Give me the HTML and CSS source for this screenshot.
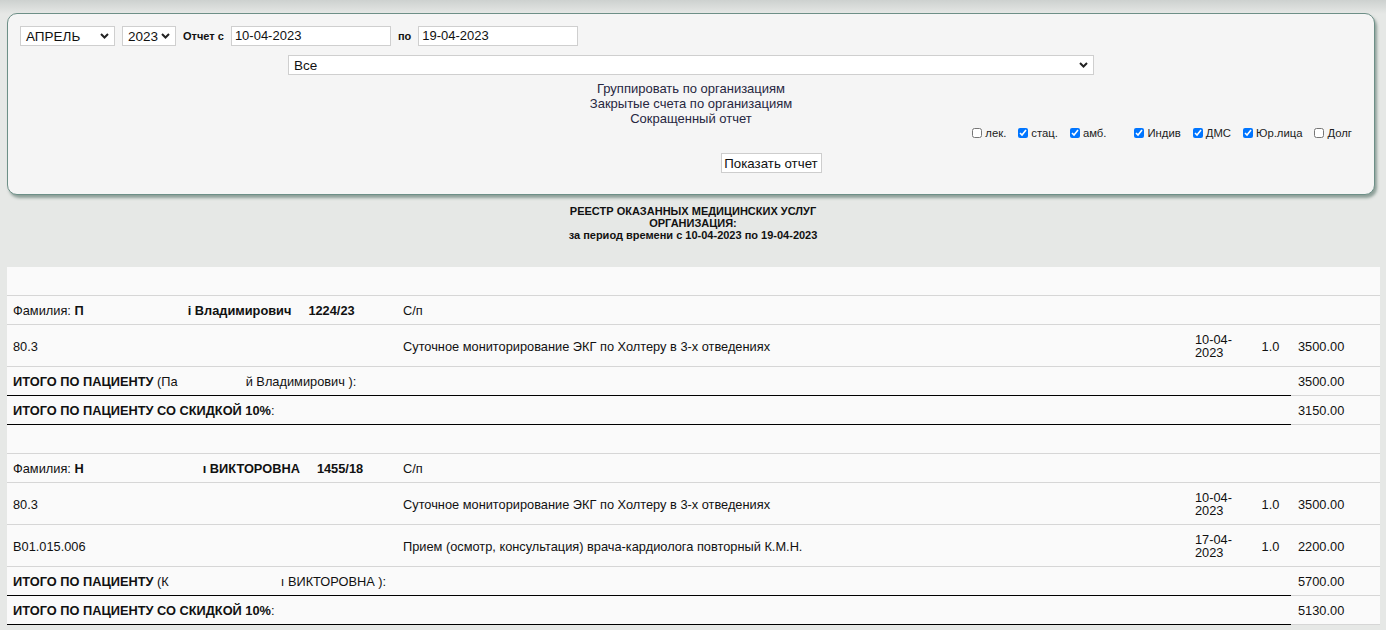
FILE: index.html
```html
<!DOCTYPE html>
<html lang="ru">
<head>
<meta charset="utf-8">
<title>Реестр оказанных медицинских услуг</title>
<link rel="stylesheet" href="styles.css">
</head>
<body>
<div class="panel">
  <div class="row1">
    <div class="fsel sel-month"><span>АПРЕЛЬ</span><svg class="chev" width="9" height="6" viewBox="0 0 9 6"><polyline points="1,1 4.5,4.5 8,1" fill="none" stroke="#222" stroke-width="2"/></svg></div>
    <div class="fsel sel-year"><span>2023</span><svg class="chev" width="9" height="6" viewBox="0 0 9 6"><polyline points="1,1 4.5,4.5 8,1" fill="none" stroke="#222" stroke-width="2"/></svg></div>
    <span class="lbl lbl-from">Отчет с</span>
    <div class="finput">10-04-2023</div>
    <span class="lbl lbl-to">по</span>
    <div class="finput">19-04-2023</div>
  </div>
  <div class="row2">
    <div class="fsel sel-org"><span>Все</span><svg class="chev" width="9" height="6" viewBox="0 0 9 6"><polyline points="1,1 4.5,4.5 8,1" fill="none" stroke="#222" stroke-width="2"/></svg></div>
  </div>
  <div class="links">
    <div>Группировать по организациям</div>
    <div>Закрытые счета по организациям</div>
    <div>Сокращенный отчет</div>
  </div>
  <div class="checks">
    <label class="chk"><input type="checkbox">лек.</label>
    <label class="chk"><input type="checkbox" checked>стац.</label>
    <label class="chk"><input type="checkbox" checked>амб.</label>
    <label class="chk grp"><input type="checkbox" checked>Индив</label>
    <label class="chk"><input type="checkbox" checked>ДМС</label>
    <label class="chk"><input type="checkbox" checked>Юр.лица</label>
    <label class="chk"><input type="checkbox">Долг</label>
  </div>
  <div class="btnrow"><button class="btn">Показать отчет</button></div>
</div>

<div class="title">
  <div>РЕЕСТР ОКАЗАННЫХ МЕДИЦИНСКИХ УСЛУГ</div>
  <div>ОРГАНИЗАЦИЯ:</div>
  <div>за период времени с 10-04-2023 по 19-04-2023</div>
</div>

<table class="report">
  <colgroup>
    <col class="c1"><col class="c2"><col class="c3"><col class="c4"><col class="c5">
  </colgroup>
  <tr><td>&nbsp;</td><td></td><td></td><td></td><td></td></tr>
  <tr>
    <td>Фамилия: <b>П</b><span class="gap g1"></span><b>і Владимирович</b><b class="num">1224/23</b></td>
    <td>С/п</td><td></td><td></td><td></td>
  </tr>
  <tr>
    <td>80.3</td>
    <td>Суточное мониторирование ЭКГ по Холтеру в 3-х отведениях</td>
    <td>10-04-2023</td><td class="qty">1.0</td><td class="amt">3500.00</td>
  </tr>
  <tr class="total">
    <td colspan="4"><b>ИТОГО ПО ПАЦИЕНТУ</b> (Па<span class="gap g2"></span>й Владимирович ):</td>
    <td class="amt">3500.00</td>
  </tr>
  <tr class="total">
    <td colspan="4"><b>ИТОГО ПО ПАЦИЕНТУ СО СКИДКОЙ 10%</b>:</td>
    <td class="amt">3150.00</td>
  </tr>
  <tr><td>&nbsp;</td><td></td><td></td><td></td><td></td></tr>
  <tr>
    <td>Фамилия: <b>Н</b><span class="gap g3"></span><b>ı ВИКТОРОВНА</b><b class="num">1455/18</b></td>
    <td>С/п</td><td></td><td></td><td></td>
  </tr>
  <tr>
    <td>80.3</td>
    <td>Суточное мониторирование ЭКГ по Холтеру в 3-х отведениях</td>
    <td>10-04-2023</td><td class="qty">1.0</td><td class="amt">3500.00</td>
  </tr>
  <tr>
    <td>B01.015.006</td>
    <td>Прием (осмотр, консультация) врача-кардиолога повторный К.М.Н.</td>
    <td>17-04-2023</td><td class="qty">1.0</td><td class="amt">2200.00</td>
  </tr>
  <tr class="total">
    <td colspan="4"><b>ИТОГО ПО ПАЦИЕНТУ</b> (К<span class="gap g4"></span>ı ВИКТОРОВНА ):</td>
    <td class="amt">5700.00</td>
  </tr>
  <tr class="total">
    <td colspan="4"><b>ИТОГО ПО ПАЦИЕНТУ СО СКИДКОЙ 10%</b>:</td>
    <td class="amt">5130.00</td>
  </tr>
</table>
</body>
</html>
```

FILE: styles.css
```css
html, body {
  margin: 0;
  padding: 0;
}
body {
  background: #e6e8e6 linear-gradient(#cdd1cf, #e6e8e6 14px) no-repeat;
  font-family: "Liberation Sans", Arial, sans-serif;
  color: #111;
  min-height: 630px;
}
.panel {
  margin: 13px 11px 0 7px;
  border: 1px solid #6d8f87;
  border-radius: 10px;
  background: #f5f5f5;
  box-shadow: 2px 3px 3px rgba(70, 100, 90, 0.55);
  padding: 12px 12px 21px 12px;
}
.row1 {
  display: flex;
  align-items: center;
  height: 20px;
}
.fsel {
  box-sizing: border-box;
  height: 20px;
  background: #fff;
  border: 1px solid #cfcfcf;
  display: flex;
  align-items: center;
  justify-content: space-between;
  padding: 0 5px 0 5px;
  font-size: 13.5px;
  color: #111;
}
.chev { display: block; }
.sel-month { width: 95px; }
.sel-year { width: 54px; margin-left: 7px; }
.lbl {
  font-size: 11px;
  font-weight: bold;
  color: #111;
}
.lbl-from { margin-left: 7px; margin-right: 7px; }
.lbl-to { margin-left: 7px; margin-right: 7px; }
.finput {
  box-sizing: border-box;
  width: 160px;
  height: 20px;
  background: #fff;
  border: 1px solid #cfcfcf;
  font-size: 13px;
  line-height: 18px;
  padding-left: 3px;
  color: #111;
}
.row2 {
  display: flex;
  justify-content: center;
  margin-top: 9px;
}
.sel-org { width: 806px; }
.links {
  margin-top: 6px;
  text-align: center;
  font-size: 13px;
  line-height: 15px;
  color: #27273f;
}
.checks {
  display: flex;
  justify-content: flex-end;
  align-items: center;
  height: 14px;
  padding-right: 10px;
  font-size: 11.3px;
  color: #222;
}
.chk {
  display: flex;
  align-items: center;
  margin-left: 12px;
}
.chk.grp { margin-left: 28px; }
.chk input {
  width: 10px;
  height: 10px;
  margin: 0 3px 0 0;
}
.btnrow {
  display: flex;
  justify-content: center;
  margin-top: 13px;
  padding-left: 160px;
}
.btn {
  box-sizing: border-box;
  width: 101px;
  height: 20px;
  background: #fff;
  border: 1px solid #cdcdcd;
  font-family: "Liberation Sans", Arial, sans-serif;
  font-size: 13.3px;
  color: #111;
  padding: 0;
}
.title {
  margin-top: 10px;
  text-align: center;
  font-size: 11px;
  font-weight: bold;
  line-height: 12px;
  color: #111;
}
.report {
  margin: 26px 0 0 7px;
  width: 1373px;
  table-layout: fixed;
  border-collapse: collapse;
  background: #fafafa;
  font-size: 12.8px;
  color: #111;
}
.c1 { width: 390px; }
.c2 { width: 792px; }
.c3 { width: 61px; }
.c4 { width: 41px; }
.c5 { width: 89px; }
.report td {
  padding: 8px 6px 7px 6px;
  line-height: 13px;
  border-bottom: 1px solid #d6d6d6;
  vertical-align: middle;
}
.report td.qty { text-align: center; padding-left: 2px; padding-right: 2px; }
.report td.amt { padding-left: 7px; }
.report tr.total td[colspan] { border-bottom: 1px solid #000; }
.gap { display: inline-block; }
.g1 { width: 104px; }
.g2 { width: 68px; }
.g3 { width: 119px; }
.g4 { width: 112px; }
.num { margin-left: 17px; }
```
